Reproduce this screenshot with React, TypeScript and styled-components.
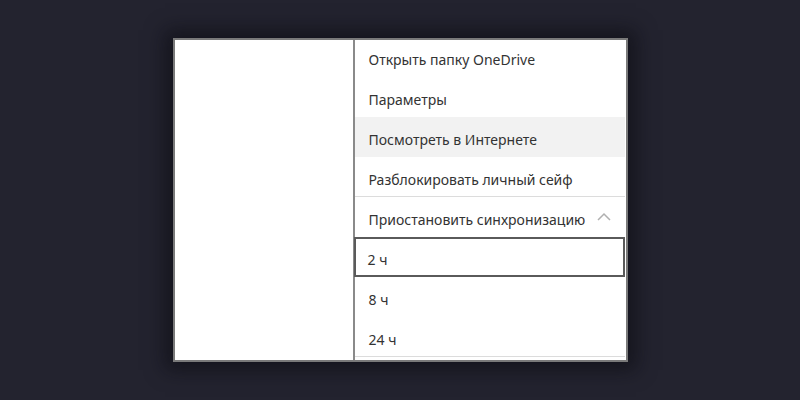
import React from "react";
import styled, { createGlobalStyle } from "styled-components";

const GlobalStyle = createGlobalStyle`
  html, body {
    margin: 0;
    padding: 0;
    background: #23232f;
  }
  #root {
    width: 800px;
    height: 400px;
  }
`;

const Stage = styled.div`
  width: 800px;
  height: 400px;
  display: flex;
  align-items: center;
  justify-content: center;
  background: #23232f;
`;

const Window = styled.div`
  width: 451px;
  height: 320px;
  display: flex;
  background: #ffffff;
  border: 2px solid #7a7a7a;
  box-shadow: 0 0 18px 8px rgba(10, 10, 14, 0.55);
`;

const SidePane = styled.div`
  width: 178px;
  background: #ffffff;
  border-right: 2px solid #8a8a8a;
`;

const Menu = styled.div`
  flex: 1;
  display: flex;
  flex-direction: column;
  padding-right: 1px;
  font-family: "Noto Sans", "Open Sans", sans-serif;
  font-size: 14px;
  color: #333333;
`;

const Item = styled.div<{ $active?: boolean; $focused?: boolean; $divider?: boolean }>`
  box-sizing: border-box;
  height: 40px;
  flex-shrink: 0;
  display: flex;
  align-items: center;
  justify-content: space-between;
  padding: 5px 14px 0 14px;
  background: ${(p) => (p.$active ? "#f2f2f2" : "#ffffff")};
  border: ${(p) => (p.$focused ? "2px solid #5a5a5a" : "none")};
  padding-left: ${(p) => (p.$focused ? "12px" : "14px")};
  border-bottom: ${(p) =>
    p.$divider ? "1px solid #dcdcdc" : p.$focused ? "2px solid #5a5a5a" : "none"};
  margin-left: ${(p) => (p.$focused ? "-1px" : "0")};
  white-space: nowrap;

  &:first-child {
    height: 37px;
    padding-top: 2px;
  }
`;

const Chevron = () => (
  <svg width="14" height="9" viewBox="0 0 14 9" fill="none" style={{ marginTop: -6 }}>
    <path d="M1 8 L7 2 L13 8" stroke="#b0b0b0" strokeWidth="1.5" />
  </svg>
);

const items = [
  { label: "Открыть папку OneDrive" },
  { label: "Параметры" },
  { label: "Посмотреть в Интернете", active: true },
  { label: "Разблокировать личный сейф", divider: true },
  { label: "Приостановить синхронизацию", expand: true },
  { label: "2 ч", focused: true },
  { label: "8 ч" },
  { label: "24 ч", divider: true },
];

export default function App() {
  return (
    <>
      <GlobalStyle />
      <Stage>
        <Window>
          <SidePane />
          <Menu>
            {items.map((it) => (
              <Item
                key={it.label}
                $active={it.active}
                $focused={it.focused}
                $divider={it.divider}
              >
                <span>{it.label}</span>
                {it.expand && <Chevron />}
              </Item>
            ))}
          </Menu>
        </Window>
      </Stage>
    </>
  );
}
